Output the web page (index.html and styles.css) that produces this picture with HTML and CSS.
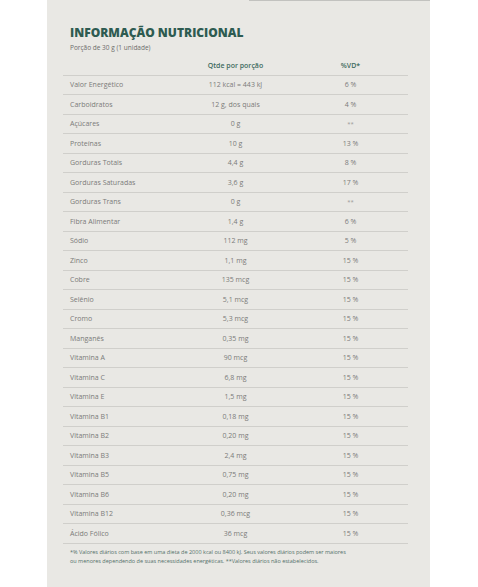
FILE: index.html
```html
<!DOCTYPE html>
<html lang="pt-BR">
<head>
<meta charset="utf-8">
<title>Informação Nutricional</title>
<link rel="stylesheet" href="styles.css">
</head>
<body>
<div class="panel">
  <div class="topline"></div>
  <h2 class="title">INFORMAÇÃO NUTRICIONAL</h2>
  <p class="portion">Porção de 30 g (1 unidade)</p>
  <div class="table">
    <div class="row head"><span></span><span>Qtde por porção</span><span>%VD*</span></div>
    <div class="row"><span>Valor Energético</span><span>112 kcal = 443 kJ</span><span>6 %</span></div>
    <div class="row"><span>Carboidratos</span><span>12 g, dos quais</span><span>4 %</span></div>
    <div class="row"><span>Açúcares</span><span>0 g</span><span class="na">**</span></div>
    <div class="row"><span>Proteínas</span><span>10 g</span><span>13 %</span></div>
    <div class="row"><span>Gorduras Totais</span><span>4,4 g</span><span>8 %</span></div>
    <div class="row"><span>Gorduras Saturadas</span><span>3,6 g</span><span>17 %</span></div>
    <div class="row"><span>Gorduras Trans</span><span>0 g</span><span class="na">**</span></div>
    <div class="row"><span>Fibra Alimentar</span><span>1,4 g</span><span>6 %</span></div>
    <div class="row"><span>Sódio</span><span>112 mg</span><span>5 %</span></div>
    <div class="row"><span>Zinco</span><span>1,1 mg</span><span>15 %</span></div>
    <div class="row"><span>Cobre</span><span>135 mcg</span><span>15 %</span></div>
    <div class="row"><span>Selênio</span><span>5,1 mcg</span><span>15 %</span></div>
    <div class="row"><span>Cromo</span><span>5,3 mcg</span><span>15 %</span></div>
    <div class="row"><span>Manganês</span><span>0,35 mg</span><span>15 %</span></div>
    <div class="row"><span>Vitamina A</span><span>90 mcg</span><span>15 %</span></div>
    <div class="row"><span>Vitamina C</span><span>6,8 mg</span><span>15 %</span></div>
    <div class="row"><span>Vitamina E</span><span>1,5 mg</span><span>15 %</span></div>
    <div class="row"><span>Vitamina B1</span><span>0,18 mg</span><span>15 %</span></div>
    <div class="row"><span>Vitamina B2</span><span>0,20 mg</span><span>15 %</span></div>
    <div class="row"><span>Vitamina B3</span><span>2,4 mg</span><span>15 %</span></div>
    <div class="row"><span>Vitamina B5</span><span>0,75 mg</span><span>15 %</span></div>
    <div class="row"><span>Vitamina B6</span><span>0,20 mg</span><span>15 %</span></div>
    <div class="row"><span>Vitamina B12</span><span>0,36 mcg</span><span>15 %</span></div>
    <div class="row"><span>Ácido Fólico</span><span>36 mcg</span><span>15 %</span></div>
  </div>
  <p class="note">*% Valores diários com base em uma dieta de 2000 kcal ou 8400 kJ. Seus valores diários podem ser maiores<br>ou menores dependendo de suas necessidades energéticas. **Valores diários não estabelecidos.</p>
</div>
</body>
</html>
```
FILE: styles.css
```css
html, body {
  margin: 0;
  padding: 0;
  background: #ffffff;
}
body {
  font-family: "Open Sans", "Liberation Sans", sans-serif;
}
.panel {
  margin-left: 47px;
  width: 383px;
  height: 587px;
  box-sizing: border-box;
  padding: 0 22px 0 16px;
  background: #e9e8e4;
  overflow: hidden;
}
.topline {
  height: 1px;
  margin-left: 186px;
  margin-right: -22px;
  background: #c2c2bf;
}
.title {
  margin: 24px 0 0 7px;
  font-size: 12px;
  line-height: 15px;
  font-weight: 800;
  color: #2e5b51;
}
.portion {
  margin: 3px 0 0 7px;
  font-size: 6.5px;
  line-height: 9px;
  color: #6d6d6b;
}
.table {
  margin-top: 4px;
}
.row {
  display: grid;
  grid-template-columns: 1fr 1fr 1fr;
  align-items: center;
  height: 18.5px;
  border-bottom: 1px solid #d0cfcb;
  font-size: 7px;
  color: #7b7b79;
}
.row span:first-child {
  padding-left: 7px;
}
.row span:nth-child(2),
.row span:nth-child(3) {
  text-align: center;
}
.row .na {
  font-size: 6px;
  color: #9a9a98;
}
.row.head {
  font-weight: 600;
  color: #3e6b60;
}
.note {
  margin: 4px 0 0 7px;
  font-size: 5.5px;
  line-height: 9px;
  color: #53706a;
}
```
